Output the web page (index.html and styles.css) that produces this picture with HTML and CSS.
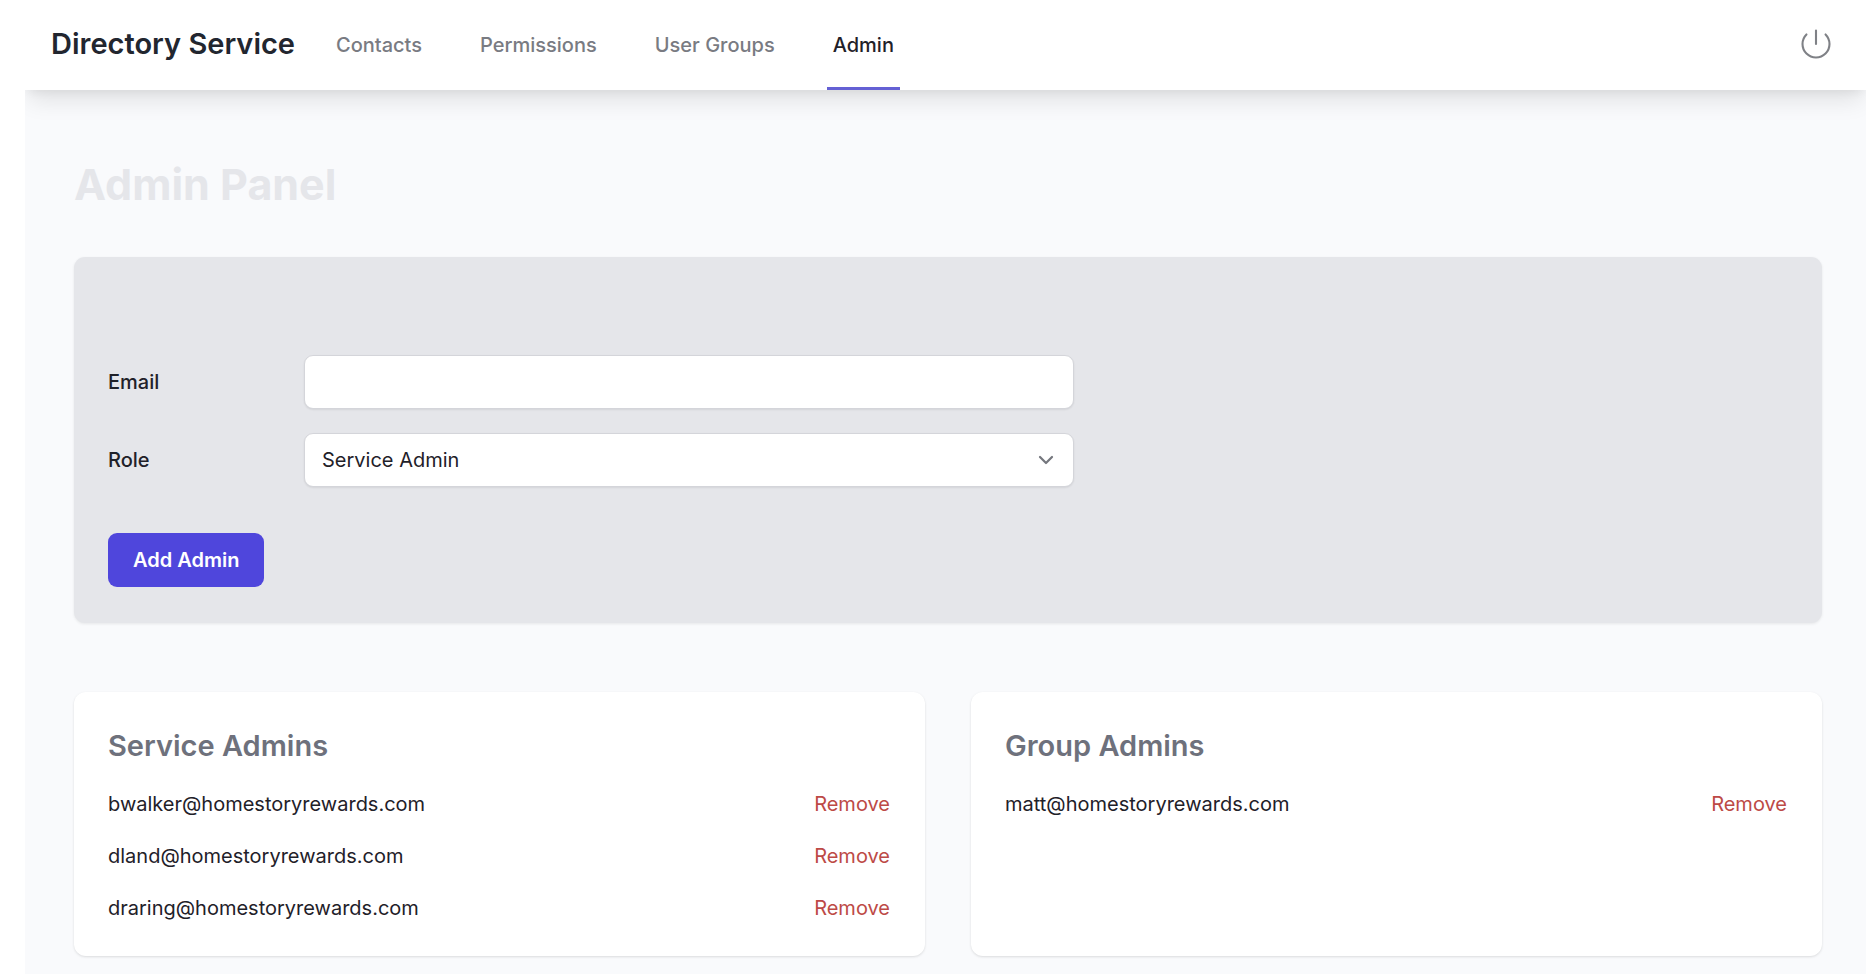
FILE: index.html
```html
<!DOCTYPE html>
<html lang="en">
<head>
<meta charset="utf-8">
<title>Directory Service</title>
<link rel="stylesheet" href="styles.css">
</head>
<body>
<div class="page">
  <header class="topbar">
    <span class="brand">Directory Service</span>
    <nav class="tabs">
      <a class="tab" href="#contacts">Contacts</a>
      <a class="tab" href="#permissions">Permissions</a>
      <a class="tab" href="#groups">User Groups</a>
      <a class="tab tab-active" href="#admin" aria-current="page">Admin</a>
    </nav>
    <button class="power" type="button" aria-label="Sign out">
      <svg viewBox="0 0 24 24" fill="none" stroke="currentColor" stroke-width="1.4" stroke-linecap="round" stroke-linejoin="round"><path d="M5.636 5.636a9 9 0 1 0 12.728 0M12 3v9"/></svg>
    </button>
  </header>
  <main class="content">
    <h1 class="title">Admin Panel</h1>
    <form class="panel">
      <div class="field">
        <label class="label" for="email">Email</label>
        <input class="control" id="email" type="email">
      </div>
      <div class="field">
        <label class="label" for="role">Role</label>
        <div class="select-wrap">
          <select class="control" id="role"><option>Service Admin</option><option>Group Admin</option></select>
          <svg class="chevron" viewBox="0 0 20 20" fill="none" stroke="currentColor" stroke-width="1.5" stroke-linecap="round" stroke-linejoin="round"><path d="M6 8l4 4 4-4"/></svg>
        </div>
      </div>
      <button class="submit" type="button">Add Admin</button>
    </form>
    <div class="cards">
      <section class="card">
        <h2 class="card-title">Service Admins</h2>
        <ul class="list">
          <li class="row"><span>bwalker@homestoryrewards.com</span><button class="remove" type="button">Remove</button></li>
          <li class="row"><span>dland@homestoryrewards.com</span><button class="remove" type="button">Remove</button></li>
          <li class="row"><span>draring@homestoryrewards.com</span><button class="remove" type="button">Remove</button></li>
        </ul>
      </section>
      <section class="card">
        <h2 class="card-title">Group Admins</h2>
        <ul class="list">
          <li class="row"><span>matt@homestoryrewards.com</span><button class="remove" type="button">Remove</button></li>
        </ul>
      </section>
    </div>
  </main>
</div>
</body>
</html>
```
FILE: styles.css
```css
* { box-sizing: border-box; }
body { margin: 0; padding: 0 2px 0 25px; background: #fff; color: #1f2129; font: 20px/28px Inter, sans-serif; }
button, input, select { font: inherit; color: inherit; }
h1, h2, ul { margin: 0; padding: 0; }
.page { display: flex; flex-direction: column; min-height: 100vh; background: #f9fafc; overflow: hidden; }
.topbar { display: flex; align-items: stretch; height: 90px; padding: 0 32px 0 26px; background: #fff; box-shadow: 0 14px 22px -4px rgba(0, 0, 0, .1), 0 5px 9px -3px rgba(0, 0, 0, .06); }
.brand { align-self: center; margin-bottom: 2px; color: #22262f; font-size: 29px; font-weight: 600; line-height: 36px; }
.tabs { display: flex; gap: 46px; margin-left: 35px; }
.tab { display: flex; align-items: center; padding: 3px 6px 0; border-bottom: 3px solid transparent; color: #797b82; font-weight: 500; text-decoration: none; }
.tab-active { border-color: #6460d4; color: #1f2129; }
.power { align-self: center; width: 36px; height: 36px; margin: 0 0 2px auto; padding: 0; border: 0; background: none; color: #7f8186; }
.power svg { display: block; }
.content { padding: 68px 44px 18px 49px; }
.title { color: #e5e6ea; font-size: 43px; font-weight: 700; line-height: 52px; }
.panel { margin-top: 47px; padding: 98px 34px 36px; border-radius: 11px; background: #e5e6ea; box-shadow: 0 1px 3px rgba(0, 0, 0, .08); }
.field { display: flex; align-items: center; margin-bottom: 24px; }
.label { width: 196px; font-weight: 500; }
.control { appearance: none; display: block; width: 100%; max-width: 770px; height: 54px; padding: 0 17px; border: 1px solid #d4d5da; border-radius: 9px; background: #fff; box-shadow: 0 1px 2px rgba(0, 0, 0, .08); }
.select-wrap { position: relative; flex: 1; max-width: 770px; }
.chevron { position: absolute; right: 13px; top: 12px; width: 30px; height: 30px; color: #75777e; pointer-events: none; }
.submit { height: 54px; margin-top: 22px; padding: 0 25px; border: 0; border-radius: 9px; background: #4f46dc; color: #fff; font-weight: 600; }
.cards { display: grid; grid-template-columns: 1fr 1fr; gap: 46px; margin-top: 69px; }
.card { padding: 34px 35px 34px 34px; border-radius: 12px; background: #fff; box-shadow: 0 1px 3px rgba(0, 0, 0, .09), 0 1px 2px rgba(0, 0, 0, .04); }
.card-title { color: #6e717c; font-size: 29px; font-weight: 600; line-height: 40px; }
.list { display: grid; gap: 24px; margin-top: 24px; list-style: none; }
.row { display: flex; justify-content: space-between; }
.remove { padding: 0; border: 0; background: none; color: #bd4a46; }
```
